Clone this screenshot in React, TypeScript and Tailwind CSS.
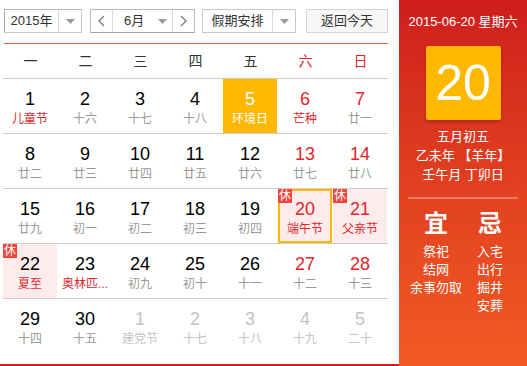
import React from "react";

type Cell = {
  d: number;
  l: string;
  numRed?: boolean;
  lunarRed?: boolean;
  light?: boolean;
  sel?: boolean;
  today?: boolean;
  rest?: boolean;
};

const rows: Cell[][] = [
  [
    { d: 1, l: "儿童节", lunarRed: true },
    { d: 2, l: "十六" },
    { d: 3, l: "十七" },
    { d: 4, l: "十八" },
    { d: 5, l: "环境日", sel: true },
    { d: 6, l: "芒种", numRed: true, lunarRed: true },
    { d: 7, l: "廿一", numRed: true },
  ],
  [
    { d: 8, l: "廿二" },
    { d: 9, l: "廿三" },
    { d: 10, l: "廿四" },
    { d: 11, l: "廿五" },
    { d: 12, l: "廿六" },
    { d: 13, l: "廿七", numRed: true },
    { d: 14, l: "廿八", numRed: true },
  ],
  [
    { d: 15, l: "廿九" },
    { d: 16, l: "初一" },
    { d: 17, l: "初二" },
    { d: 18, l: "初三" },
    { d: 19, l: "初四" },
    { d: 20, l: "端午节", numRed: true, lunarRed: true, today: true, rest: true },
    { d: 21, l: "父亲节", numRed: true, lunarRed: true, rest: true },
  ],
  [
    { d: 22, l: "夏至", lunarRed: true, rest: true },
    { d: 23, l: "奥林匹...", lunarRed: true },
    { d: 24, l: "初九" },
    { d: 25, l: "初十" },
    { d: 26, l: "十一" },
    { d: 27, l: "十二", numRed: true },
    { d: 28, l: "十三", numRed: true },
  ],
  [
    { d: 29, l: "十四" },
    { d: 30, l: "十五" },
    { d: 1, l: "建党节", light: true },
    { d: 2, l: "十七", light: true },
    { d: 3, l: "十八", light: true },
    { d: 4, l: "十九", light: true },
    { d: 5, l: "二十", light: true },
  ],
];

const weekdays = ["一", "二", "三", "四", "五", "六", "日"];

const Caret = () => (
  <svg width="9" height="5" viewBox="0 0 9 5">
    <path d="M0 0 L9 0 L4.5 5 Z" fill="#9a9a9a" />
  </svg>
);

const Chevron = ({ dir }: { dir: "l" | "r" }) => (
  <svg width="7" height="12" viewBox="0 0 7 12">
    <path
      d={dir === "l" ? "M6 1 L1 6 L6 11" : "M1 1 L6 6 L1 11"}
      fill="none"
      stroke="#777"
      strokeWidth="1.3"
    />
  </svg>
);

function DayCell({ c }: { c: Cell }) {
  let bg = "";
  if (c.sel) bg = "bg-[#ffb800]";
  else if (c.rest) bg = "bg-[#fdeceb]";
  const numColor = c.sel
    ? "text-white"
    : c.light
    ? "text-[#c4c4c4]"
    : c.numRed
    ? "text-[#e0262b]"
    : "text-black";
  const lunarColor = c.sel
    ? "text-white"
    : c.light
    ? "text-[#c4c4c4]"
    : c.lunarRed
    ? "text-[#e0262b]"
    : "text-[#999999]";
  return (
    <div className="w-[55px] h-[54px] flex">
      <div
        className={`relative w-[54px] h-[54px] flex flex-col items-center pt-[9px] ${bg} ${
          c.today ? "shadow-[inset_0_0_0_2px_#ffb800]" : ""
        }`}
      >
        {c.rest && (
          <div className="absolute left-0 top-0 w-[14px] h-[14px] bg-[#f2453b] text-white text-[12px] leading-[14px] text-center">
            休
          </div>
        )}
        <div className={`text-[18px] leading-[22px] ${numColor}`}>{c.d}</div>
        <div className={`text-[12px] leading-[16px] mt-[1px] whitespace-nowrap ${lunarColor}`}>{c.l}</div>
      </div>
    </div>
  );
}

export default function App() {
  return (
    <div
      className="flex w-[527px] h-[366px] bg-white"
      style={{ fontFamily: '"Liberation Sans", "Noto Sans CJK SC", sans-serif' }}
    >
      {/* Left calendar */}
      <div className="w-[399px] h-[366px] border-b-2 border-[#c81f1f] pl-[3px] flex flex-col">
        {/* Controls */}
        <div className="flex items-center mt-[9px] ml-[1px] h-[24px] text-[13px] text-[#333] whitespace-nowrap">
          <div className="flex h-[24px] w-[78px] border border-[#c8c8c8] border-l-[#a8a8a8] border-t-[#b8b8b8] bg-white">
            <div className="w-[53px] flex items-center justify-center">2015年</div>
            <div className="w-[23px] border-l border-[#d8d8d8] flex items-center justify-center">
              <Caret />
            </div>
          </div>
          <div className="flex h-[24px] w-[105px] ml-[8px] border border-[#b8b8b8] border-b-[#a0a0a0] bg-white">
            <div className="w-[22px] flex items-center justify-center border-r border-[#d8d8d8]">
              <Chevron dir="l" />
            </div>
            <div className="w-[59px] flex items-center pl-[11px] gap-[14px]">
              <span>6月</span>
              <Caret />
            </div>
            <div className="w-[22px] flex items-center justify-center border-l border-[#d8d8d8]">
              <Chevron dir="r" />
            </div>
          </div>
          <div className="flex h-[24px] w-[94px] ml-[7px] border border-[#c8c8c8] bg-white">
            <div className="w-[69px] flex items-center justify-center">假期安排</div>
            <div className="w-[23px] border-l border-[#d8d8d8] flex items-center justify-center">
              <Caret />
            </div>
          </div>
          <div className="flex h-[24px] w-[82px] ml-[10px] border border-[#d4d4d4] bg-[#f7f7f7] items-center justify-center">
            返回今天
          </div>
        </div>
        {/* red line */}
        <div className="mt-[10px] ml-[1px] w-[384px] h-px bg-[#f25a4a]" />
        {/* weekdays */}
        <div className="flex w-[385px] h-[35px] border-b border-[#cccccc]">
          {weekdays.map((w, i) => (
            <div
              key={w}
              className={`w-[55px] flex items-center justify-center text-[14px] ${
                i >= 5 ? "text-[#e0262b]" : "text-[#333]"
              }`}
            >
              {w}
            </div>
          ))}
        </div>
        {rows.map((r, ri) => (
          <div
            key={ri}
            className={`flex w-[385px] ${ri < rows.length - 1 ? "border-b border-[#cccccc]" : ""}`}
          >
            {r.map((c, ci) => (
              <DayCell key={ci} c={c} />
            ))}
          </div>
        ))}
      </div>
      {/* Right panel */}
      <div className="w-[128px] h-[366px] bg-gradient-to-b from-[#ce1d1d] to-[#f35a23] flex flex-col items-center text-white">
        <div className="mt-[13px] text-[13px] leading-[18px] whitespace-nowrap">2015-06-20 星期六</div>
        <div className="mt-[15px] w-[75px] h-[74px] bg-[#ffb800] rounded-[2px] shadow-[0_2px_3px_rgba(120,0,0,0.35)] flex items-center justify-center text-[50px] leading-none">
          20
        </div>
        <div className="mt-[7px] text-[13px] leading-[19px] text-center whitespace-nowrap">
          <div>五月初五</div>
          <div>乙未年 【羊年】</div>
          <div>壬午月 丁卯日</div>
        </div>
        <div className="mt-[13px] w-[110px] h-[2px] bg-[rgba(255,255,255,0.3)]" />
        <div className="w-[108px] flex mt-[11px]">
          <div className="w-[54px] flex flex-col items-center">
            <div className="text-[24px] leading-[28px] font-bold">宜</div>
            <div className="mt-[5px] text-[13px] leading-[18px] text-center whitespace-nowrap">
              <div>祭祀</div>
              <div>结网</div>
              <div>余事勿取</div>
            </div>
          </div>
          <div className="w-[54px] flex flex-col items-center">
            <div className="text-[24px] leading-[28px] font-bold">忌</div>
            <div className="mt-[5px] text-[13px] leading-[18px] text-center whitespace-nowrap">
              <div>入宅</div>
              <div>出行</div>
              <div>掘井</div>
              <div>安葬</div>
            </div>
          </div>
        </div>
      </div>
    </div>
  );
}
